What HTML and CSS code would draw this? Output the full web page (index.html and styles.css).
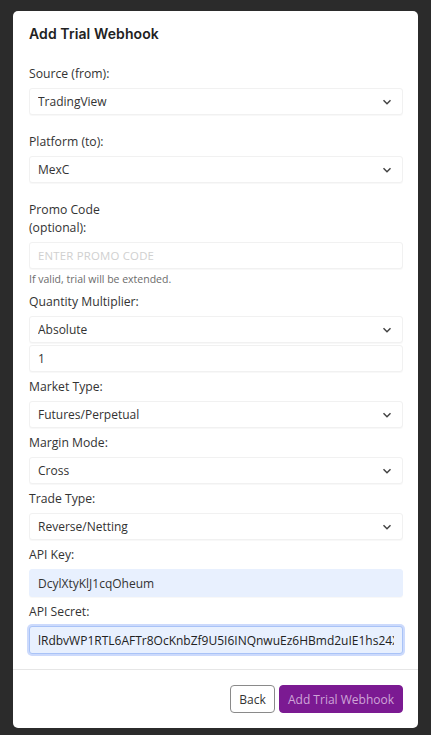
FILE: index.html
```html
<!DOCTYPE html>
<html>
<head>
<meta charset="utf-8">
<link rel="stylesheet" href="styles.css">
</head>
<body>
<div class="modal">
  <div class="modal-header">
    <h2 class="modal-title">Add Trial Webhook</h2>
  </div>
  <div class="modal-body">
    <div class="group group-lg">
      <label class="label">Source (from):</label>
      <div class="select-wrap">
        <select class="control"><option>TradingView</option></select>
        <svg class="chev" width="10" height="6" viewBox="0 0 10 6"><path d="M1.5 1.2l3.5 3.5 3.5-3.5" fill="none" stroke="#444" stroke-width="1.5"/></svg>
      </div>
    </div>
    <div class="group group-lg">
      <label class="label">Platform (to):</label>
      <div class="select-wrap">
        <select class="control"><option>MexC</option></select>
        <svg class="chev" width="10" height="6" viewBox="0 0 10 6"><path d="M1.5 1.2l3.5 3.5 3.5-3.5" fill="none" stroke="#444" stroke-width="1.5"/></svg>
      </div>
    </div>
    <div class="group group-promo">
      <label class="label label-narrow">Promo Code (optional):</label>
      <input class="control promo" type="text" placeholder="ENTER PROMO CODE">
      <div class="help">If valid, trial will be extended.</div>
    </div>
    <div class="group">
      <label class="label">Quantity Multiplier:</label>
      <div class="select-wrap">
        <select class="control"><option>Absolute</option></select>
        <svg class="chev" width="10" height="6" viewBox="0 0 10 6"><path d="M1.5 1.2l3.5 3.5 3.5-3.5" fill="none" stroke="#444" stroke-width="1.5"/></svg>
      </div>
      <input class="control qty" type="text" value="1">
    </div>
    <div class="group">
      <label class="label">Market Type:</label>
      <div class="select-wrap">
        <select class="control"><option>Futures/Perpetual</option></select>
        <svg class="chev" width="10" height="6" viewBox="0 0 10 6"><path d="M1.5 1.2l3.5 3.5 3.5-3.5" fill="none" stroke="#444" stroke-width="1.5"/></svg>
      </div>
    </div>
    <div class="group">
      <label class="label">Margin Mode:</label>
      <div class="select-wrap">
        <select class="control"><option>Cross</option></select>
        <svg class="chev" width="10" height="6" viewBox="0 0 10 6"><path d="M1.5 1.2l3.5 3.5 3.5-3.5" fill="none" stroke="#444" stroke-width="1.5"/></svg>
      </div>
    </div>
    <div class="group">
      <label class="label">Trade Type:</label>
      <div class="select-wrap">
        <select class="control"><option>Reverse/Netting</option></select>
        <svg class="chev" width="10" height="6" viewBox="0 0 10 6"><path d="M1.5 1.2l3.5 3.5 3.5-3.5" fill="none" stroke="#444" stroke-width="1.5"/></svg>
      </div>
    </div>
    <div class="group">
      <label class="label">API Key:</label>
      <input class="control filled" type="text" value="DcylXtyKlJ1cqOheum">
    </div>
    <div class="group group-last">
      <label class="label">API Secret:</label>
      <input class="control filled focused" type="text" value="lRdbvWP1RTL6AFTr8OcKnbZf9U5I6INQnwuEz6HBmd2uIE1hs24Xk9pQ">
    </div>
  </div>
  <div class="modal-footer">
    <button class="btn btn-back">Back</button>
    <button class="btn btn-primary">Add Trial Webhook</button>
  </div>
</div>
</body>
</html>
```
FILE: styles.css
```css
* { box-sizing: border-box; }
html, body { margin: 0; padding: 0; }
body {
  background: #2b2b2b;
  font-family: "Open Sans", "Liberation Sans", sans-serif;
  color: #333;
  height: 735px;
  overflow: hidden;
  padding: 11px 13px 0 13px;
}
.modal {
  background: #fff;
  border-radius: 5px;
  width: 405px;
  height: 717px;
  display: flex;
  flex-direction: column;
}
.modal-header {
  padding: 12px 16px 0 16px;
}
.modal-title {
  margin: 0;
  font-family: "Inter", "Open Sans", sans-serif;
  font-weight: 600;
  font-size: 14px;
  line-height: 22px;
  color: #222;
  letter-spacing: 0.1px;
}
.modal-body {
  padding: 20px 15px 0 16px;
  flex: 1;
}
.group { margin-bottom: 6px; }
.group-lg { margin-bottom: 18px; }
.group-promo { margin-bottom: 7px; }
.group-last { margin-bottom: 0; }
.label {
  display: block;
  font-size: 12.2px;
  line-height: 18px;
  margin-bottom: 5px;
  color: #333;
}
.label-narrow { width: 90px; }
.select-wrap { position: relative; }
.control {
  display: block;
  width: 100%;
  height: 27px;
  margin: 0;
  padding: 0 8px;
  font-family: "Open Sans", "Liberation Sans", sans-serif;
  font-size: 12px;
  color: #333;
  background: #fff;
  border: 1px solid #f1f1f1;
  border-radius: 3px;
  outline: none;
  box-shadow: 0 1px 1px rgba(0,0,0,0.03);
  -webkit-appearance: none;
  appearance: none;
}
.chev {
  position: absolute;
  right: 11px;
  top: 11px;
  pointer-events: none;
}
.promo::placeholder {
  color: #d0d0d0;
  font-size: 11.4px;
  letter-spacing: 0.2px;
}
.help {
  font-size: 10.5px;
  line-height: 14px;
  margin-top: 3px;
  color: #6c6c6c;
}
.qty { margin-top: 2px; }
.filled {
  background: #e8f0fe;
  border-color: #e8f0fe;
  height: 28px;
}
.focused {
  height: 28px;
  border: 1px solid #a9c3f7;
  box-shadow: 0 0 0 2px #ccdafc;
  color: #222;
}
.modal-footer {
  margin-top: 13px;
  border-top: 1px solid #e6e6e6;
  padding: 15px 15px 15px 0;
  display: flex;
  justify-content: flex-end;
  gap: 4px;
}
.btn {
  height: 28px;
  font-family: "Open Sans", "Liberation Sans", sans-serif;
  font-size: 12px;
  border-radius: 4px;
  padding: 0 6px;
  white-space: nowrap;
  cursor: pointer;
}
.btn-back {
  background: #fff;
  border: 1px solid #8a8a8a;
  color: #333;
  width: 45px;
}
.btn-primary {
  background: #7b1a92;
  border: 1px solid #7b1a92;
  color: #cfa5d8;
  width: 124px;
}
```
